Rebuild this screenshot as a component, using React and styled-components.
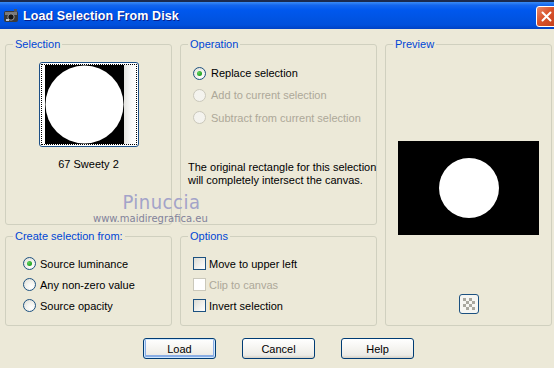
import React from 'react'
import styled, { createGlobalStyle, css } from 'styled-components'

const GlobalStyle = createGlobalStyle`
  html, body {
    margin: 0;
    padding: 0;
    background: #ece9d8;
    overflow: hidden;
  }
  body {
    font-family: 'Liberation Sans', Arial, sans-serif;
    font-size: 11px;
    color: #000;
  }
`

const Window = styled.div`
  position: relative;
  width: 554px;
  height: 368px;
  overflow: hidden;
  background: #ece9d8;
  display: flex;
  flex-direction: column;
`

const TitleBar = styled.div`
  height: 27px;
  flex: none;
  border-top: 2px solid #1b2a4e;
  display: flex;
  align-items: center;
  padding-left: 3px;
  gap: 4px;
  background: linear-gradient(
    to bottom,
    #3a8cf6 0%,
    #1466ee 12%,
    #0058ee 30%,
    #0054e3 60%,
    #0050dc 85%,
    #0042c4 100%
  );
`

const Title = styled.div`
  flex: 1;
  color: #fff;
  font-weight: bold;
  font-size: 12.5px;
  letter-spacing: 0.1px;
  text-shadow: 1px 1px 0 #0a1e8a;
  padding-top: 1px;
`

const CloseButton = styled.div`
  width: 21px;
  height: 21px;
  margin-right: -3px;
  margin-top: 2px;
  box-sizing: border-box;
  border: 1px solid #fff;
  border-radius: 3px;
  background: linear-gradient(135deg, #e98a6a 0%, #d9532c 45%, #c2401c 100%);
  display: flex;
  align-items: center;
  justify-content: center;
`

const Body = styled.div`
  flex: 1;
  padding: 9px 2px 0 5px;
  display: flex;
  flex-direction: column;
`

const Groups = styled.div`
  display: grid;
  grid-template-columns: 167px 197px 167px;
  grid-template-rows: 187px 96px;
  column-gap: 8px;
  row-gap: 5px;
`

const Group = styled.fieldset`
  margin: 0;
  padding: 0;
  min-width: 0;
  box-sizing: border-box;
  border: 1px solid #d0d0bf;
  border-radius: 3px;
  grid-row: ${(p) => p.$row};
  grid-column: ${(p) => p.$col};
`

const Legend = styled.legend`
  color: #0046d5;
  padding: 0 2px;
  margin-left: 7px;
  line-height: 13px;
  font-size: 11px;
`

const Content = styled.div`
  padding: ${(p) => p.$pad || '0'};
  display: flex;
  flex-direction: column;
  align-items: ${(p) => (p.$center ? 'center' : 'stretch')};
`

const Thumb = styled.div`
  width: 100px;
  height: 85px;
  box-sizing: border-box;
  border: 1px solid #1c4f86;
  border-radius: 3px;
  background: #fff;
  padding: 1px;
`

const FocusRect = styled.div`
  height: 100%;
  box-sizing: border-box;
  border: 1px dotted #000;
  display: flex;
  padding-left: 3px;
  align-items: center;
`

const Strip = styled.div`
  flex: 1;
  align-self: stretch;
  background: linear-gradient(to right, #e4e4e0, #fafafa 60%, #fff);
`

const ThumbLabel = styled.div`
  margin-top: 11px;
  line-height: 13px;
`

const OptionRow = styled.label`
  display: flex;
  align-items: center;
  height: ${(p) => p.$h || 21}px;
  gap: ${(p) => p.$gap || 4}px;
  color: ${(p) => (p.$disabled ? '#aca899' : '#000')};
  white-space: nowrap;
`

const RadioMark = styled.span`
  width: 13px;
  height: 13px;
  box-sizing: border-box;
  border-radius: 50%;
  border: 1px solid ${(p) => (p.$disabled ? '#cac8bb' : '#1c5180')};
  background: ${(p) =>
    p.$disabled
      ? '#f4f3ee'
      : 'radial-gradient(circle at 65% 70%, #fff 0%, #f4f4f0 40%, #dcdbd2 100%)'};
  display: flex;
  align-items: center;
  justify-content: center;
  flex: none;
  &::after {
    content: '';
    width: 5px;
    height: 5px;
    border-radius: 50%;
    background: radial-gradient(circle at 35% 35%, #60d060, #21a121 70%);
    display: ${(p) => (p.$checked ? 'block' : 'none')};
  }
`

const CheckMark = styled.span`
  width: 13px;
  height: 13px;
  box-sizing: border-box;
  border: 1px solid ${(p) => (p.$disabled ? '#cac8bb' : '#1c5180')};
  flex: none;
  ${(p) =>
    p.$disabled
      ? css`
          background: #fff;
        `
      : css`
          background: linear-gradient(135deg, #dcdcd4 0%, #f2f2ee 60%, #fff 100%);
        `}
`

const Note = styled.p`
  margin: 32px 0 0 -5px;
  line-height: 13px;
  white-space: nowrap;
`

const PreviewFrame = styled.div`
  margin-top: 90px;
  line-height: 0;
`

const CheckerButton = styled.div`
  margin-top: 59px;
  width: 20px;
  height: 20px;
  box-sizing: border-box;
  border: 1px solid #1c5180;
  border-radius: 3px;
  background: #f6f6f2;
  display: flex;
  align-items: center;
  justify-content: center;
`

const ButtonRow = styled.div`
  display: flex;
  margin-top: 12px;
  padding-left: 138px;
  gap: 26px;
`

const Button = styled.div`
  width: 73px;
  height: 21px;
  box-sizing: border-box;
  border: 1px solid #003c74;
  border-radius: 3px;
  background: linear-gradient(to bottom, #ffffff 0%, #f5f4f0 50%, #ecebe6 85%, #d6d0c5 100%);
  display: flex;
  align-items: center;
  justify-content: center;
  ${(p) =>
    p.$default &&
    css`
      box-shadow: inset 0 0 0 1px #cee7ff, inset 0 -1px 0 2px #89ade4;
    `}
`

const Watermark = styled.div`
  position: absolute;
  left: 93px;
  top: 191px;
  display: flex;
  flex-direction: column;
  align-items: center;
  pointer-events: none;
`

const WatermarkName = styled.div`
  font-family: 'DejaVu Sans Condensed', 'DejaVu Sans', sans-serif;
  font-size: 20px;
  line-height: 22px;
  color: #a3a3c9;
  letter-spacing: 0.5px;
  padding-left: 22px;
`

const WatermarkUrl = styled.div`
  font-family: 'DejaVu Sans', sans-serif;
  font-size: 10px;
  line-height: 12px;
  color: #82829a;
`

const AppIcon = () => (
  <svg width="16" height="16" viewBox="0 0 16 16">
    <rect x="1" y="3" width="14" height="11" rx="2" fill="#3a3a3a" />
    <rect x="2" y="4" width="12" height="3" fill="#7a7a7a" />
    <circle cx="8" cy="9" r="3.2" fill="#151515" stroke="#9a9a9a" strokeWidth="1" />
    <rect x="11" y="1" width="3" height="3" fill="#555" />
    <rect x="3" y="11" width="3" height="2" fill="#c8c8c8" />
  </svg>
)

const Radio = ({ label, checked, disabled, h, gap }) => (
  <OptionRow $disabled={disabled} $h={h} $gap={gap}>
    <RadioMark $checked={checked} $disabled={disabled} />
    {label}
  </OptionRow>
)

const Check = ({ label, disabled }) => (
  <OptionRow $disabled={disabled} $gap={3}>
    <CheckMark $disabled={disabled} />
    {label}
  </OptionRow>
)

export default function App() {
  return (
    <>
      <GlobalStyle />
      <Window>
        <TitleBar>
          <AppIcon />
          <Title>Load Selection From Disk</Title>
          <CloseButton>
            <svg width="11" height="11" viewBox="0 0 11 11">
              <path d="M1.5 1.5 L9.5 9.5 M9.5 1.5 L1.5 9.5" stroke="#fff" strokeWidth="2" strokeLinecap="round" />
            </svg>
          </CloseButton>
        </TitleBar>
        <Body>
          <Groups>
            <Group $row="1" $col="1">
              <Legend>Selection</Legend>
              <Content $center $pad="11px 0 0">
                <Thumb>
                  <FocusRect>
                    <svg width="79" height="79" viewBox="0 0 79 79">
                      <rect width="79" height="79" fill="#000" />
                      <circle cx="39.5" cy="39.5" r="39" fill="#fff" />
                    </svg>
                    <Strip />
                  </FocusRect>
                </Thumb>
                <ThumbLabel>67 Sweety 2</ThumbLabel>
              </Content>
            </Group>

            <Group $row="1" $col="2">
              <Legend>Operation</Legend>
              <Content $pad="11px 0 0 12px">
                <Radio label="Replace selection" checked h={22} gap={5} />
                <Radio label="Add to current selection" disabled h={22.5} gap={5} />
                <Radio label="Subtract from current selection" disabled h={22.5} gap={5} />
                <Note>
                  The original rectangle for this selection
                  <br />
                  will completely intersect the canvas.
                </Note>
              </Content>
            </Group>

            <Group $row="1 / span 2" $col="3">
              <Legend>Preview</Legend>
              <Content $center>
                <PreviewFrame>
                  <svg width="141" height="94" viewBox="0 0 141 94">
                    <rect width="141" height="94" fill="#000" />
                    <circle cx="71" cy="47" r="30" fill="#fff" />
                  </svg>
                </PreviewFrame>
                <CheckerButton>
                  <svg width="14" height="14" viewBox="0 0 14 14">
                    {[0, 1, 2, 3].map((r) =>
                      [0, 1, 2, 3].map((c) =>
                        (r + c) % 2 === 0 ? (
                          <rect key={`${r}-${c}`} x={1 + c * 3} y={1 + r * 3} width="3" height="3" fill="#a9a89f" />
                        ) : null
                      )
                    )}
                  </svg>
                </CheckerButton>
              </Content>
            </Group>

            <Group $row="2" $col="1">
              <Legend>Create selection from:</Legend>
              <Content $pad="10px 0 0 17px">
                <Radio label="Source luminance" checked />
                <Radio label="Any non-zero value" />
                <Radio label="Source opacity" />
              </Content>
            </Group>

            <Group $row="2" $col="2">
              <Legend>Options</Legend>
              <Content $pad="10px 0 0 12px">
                <Check label="Move to upper left" />
                <Check label="Clip to canvas" disabled />
                <Check label="Invert selection" />
              </Content>
            </Group>
          </Groups>

          <ButtonRow>
            <Button $default>Load</Button>
            <Button>Cancel</Button>
            <Button>Help</Button>
          </ButtonRow>
        </Body>
        <Watermark>
          <WatermarkName>Pinuccia</WatermarkName>
          <WatermarkUrl>www.maidiregrafica.eu</WatermarkUrl>
        </Watermark>
      </Window>
    </>
  )
}
